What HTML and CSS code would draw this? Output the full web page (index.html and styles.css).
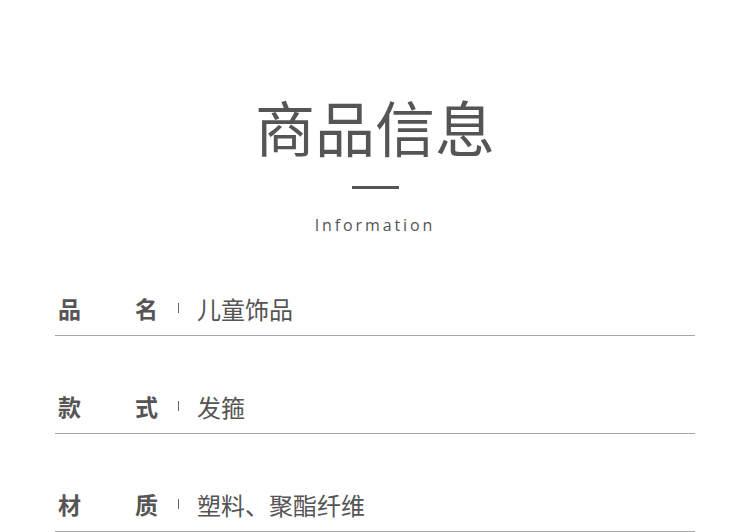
FILE: index.html
```html
<!DOCTYPE html>
<html lang="zh-CN">
<head>
    <meta charset="UTF-8">
    <meta name="viewport" content="width=device-width, initial-scale=1.0">
    <title>商品信息</title>
    <link rel="stylesheet" href="styles.css">
</head>
<body>
    <div class="page">
        <div class="heading">
            <h1>商品信息</h1>
            <div class="dash"></div>
            <p class="subtitle">Information</p>
        </div>

        <div class="specs">
            <div class="row">
                <div class="label"><span>品</span><span>名</span></div>
                <span class="sep"></span>
                <div class="value">儿童饰品</div>
            </div>
            <div class="row">
                <div class="label"><span>款</span><span>式</span></div>
                <span class="sep"></span>
                <div class="value">发箍</div>
            </div>
            <div class="row">
                <div class="label"><span>材</span><span>质</span></div>
                <span class="sep"></span>
                <div class="value">塑料、聚酯纤维</div>
            </div>
        </div>
    </div>
</body>
</html>
```

FILE: styles.css
```css
body {
    margin: 0;
    padding: 0;
    background: #ffffff;
    color: #555555;
    font-family: "Noto Sans CJK SC", "Noto Sans", sans-serif;
}

.page {
    width: 750px;
    height: 532px;
    overflow: hidden;
}

.heading {
    display: flex;
    flex-direction: column;
    align-items: center;
    padding-top: 90px;
}

.heading h1 {
    margin: 0;
    font-size: 60px;
    font-weight: 400;
    line-height: 72px;
    color: #555555;
}

.dash {
    width: 47px;
    height: 3px;
    background: #555555;
    margin-top: 24px;
}

.subtitle {
    margin: 25px 0 0;
    font-family: "Open Sans", "Noto Sans", sans-serif;
    font-size: 16px;
    line-height: 22px;
    letter-spacing: 2.9px;
    color: #555555;
}

.specs {
    margin-top: 45px;
    padding: 0 55px;
}

.row {
    display: flex;
    align-items: center;
    height: 54px;
    border-bottom: 1px solid #a6a6a6;
    margin-bottom: 43px;
    padding-left: 3px;
}

.label {
    display: flex;
    justify-content: space-between;
    width: 100px;
    font-size: 23px;
    font-weight: 700;
    color: #555555;
}

.sep {
    width: 1px;
    height: 10px;
    background: #666666;
    margin: 0 18px 0 20px;
}

.value {
    font-size: 24px;
    color: #555555;
}
```
